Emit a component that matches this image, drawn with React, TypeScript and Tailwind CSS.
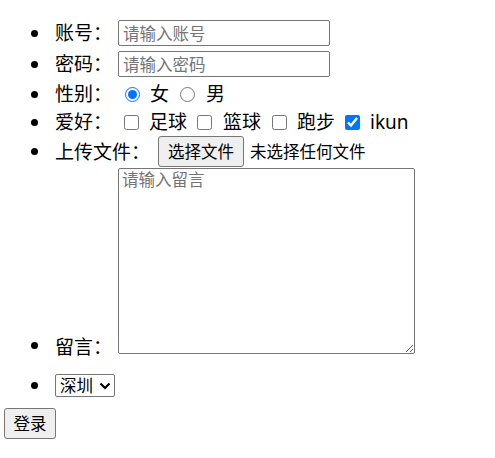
const font = "font-['Noto_Sans','Noto_Sans_CJK_SC',sans-serif]";

function Bullet() {
  return <span className="ml-[31px] mr-[17px] block h-[7px] w-[7px] shrink-0 rounded-full bg-black" />;
}

function Label({ text }: { text: string }) {
  return <span className="text-[19px] leading-[22px] text-black">{text}</span>;
}

export default function App() {
  return (
    <div className={`${font} min-h-[458px] w-[495px] bg-white pt-[20px] text-black`}>
      <ul>
        {/* 账号 */}
        <li className="flex h-[26px] items-center">
          <Bullet />
          <Label text="账号：" />
          <input
            type="text"
            placeholder="请输入账号"
            className="ml-[6px] h-[26px] w-[212px] rounded-[2px] border border-[#767676] px-[4px] text-[16.5px] outline-none placeholder:text-[#757575]"
          />
        </li>

        {/* 密码 */}
        <li className="mt-[5px] flex h-[26px] items-center">
          <Bullet />
          <Label text="密码：" />
          <input
            type="password"
            placeholder="请输入密码"
            className="ml-[6px] h-[26px] w-[212px] rounded-[2px] border border-[#767676] px-[4px] text-[16.5px] outline-none placeholder:text-[#757575]"
          />
        </li>

        {/* 性别 */}
        <li className="mt-[3px] flex h-[28px] items-center">
          <Bullet />
          <Label text="性别：" />
          <input type="radio" name="sex" defaultChecked className="m-0 ml-[13px] h-[15px] w-[15px] accent-[#0075ff]" />
          <span className="ml-[10px] text-[19px] leading-[22px]">女</span>
          <input type="radio" name="sex" className="m-0 ml-[11px] h-[15px] w-[15px]" />
          <span className="ml-[11px] text-[19px] leading-[22px]">男</span>
        </li>

        {/* 爱好 */}
        <li className="flex h-[28px] items-center">
          <Bullet />
          <Label text="爱好：" />
          <input type="checkbox" className="m-0 ml-[12px] h-[15px] w-[15px]" />
          <span className="ml-[10px] text-[19px] leading-[22px]">足球</span>
          <input type="checkbox" className="m-0 ml-[10px] h-[15px] w-[15px]" />
          <span className="ml-[11px] text-[19px] leading-[22px]">篮球</span>
          <input type="checkbox" className="m-0 ml-[11px] h-[15px] w-[15px]" />
          <span className="ml-[10px] text-[19px] leading-[22px]">跑步</span>
          <input type="checkbox" defaultChecked className="m-0 ml-[10px] h-[15px] w-[15px] accent-[#0075ff]" />
          <span className="ml-[10px] text-[19px] leading-[22px]">ikun</span>
        </li>

        {/* 上传文件 */}
        <li className="flex h-[31px] items-center">
          <Bullet />
          <Label text="上传文件：" />
          <button
            type="button"
            className="ml-[8px] flex h-[31px] w-[86px] items-center justify-center rounded-[3px] border border-[#767676] bg-[#efefef] text-[16.5px] leading-[20px]"
          >
            选择文件
          </button>
          <span className="ml-[6px] text-[16.5px] leading-[20px]">未选择任何文件</span>
        </li>

        {/* 留言 */}
        <li className="mt-[1px] flex items-end">
          <span className="flex items-center">
            <Bullet />
            <span className="mb-[-6px]">
              <Label text="留言：" />
            </span>
          </span>
          <textarea
            placeholder="请输入留言"
            className="ml-[6px] h-[186px] w-[297px] rounded-[2px] border border-[#767676] px-[3px] py-[1px] text-[16.5px] leading-[20px] outline-none placeholder:text-[#757575]"
          />
        </li>

        {/* 城市 */}
        <li className="mt-[20px] flex h-[23px] items-center">
          <Bullet />
          <div className="flex h-[23px] w-[60px] items-center rounded-[2px] border border-[#767676] pl-[4px] text-[16.5px] leading-[20px]">
            <span>深圳</span>
            <svg width="12" height="8" viewBox="0 0 12 8" className="ml-[6px]">
              <path d="M1.5 1.5 L6 6 L10.5 1.5" fill="none" stroke="black" strokeWidth="2.2" />
            </svg>
          </div>
        </li>
      </ul>

      <button
        type="button"
        className="ml-[4px] mt-[11px] flex h-[31px] w-[52px] items-center justify-center rounded-[3px] border border-[#767676] bg-[#efefef] text-[16.5px] leading-[20px]"
      >
        登录
      </button>
    </div>
  );
}
